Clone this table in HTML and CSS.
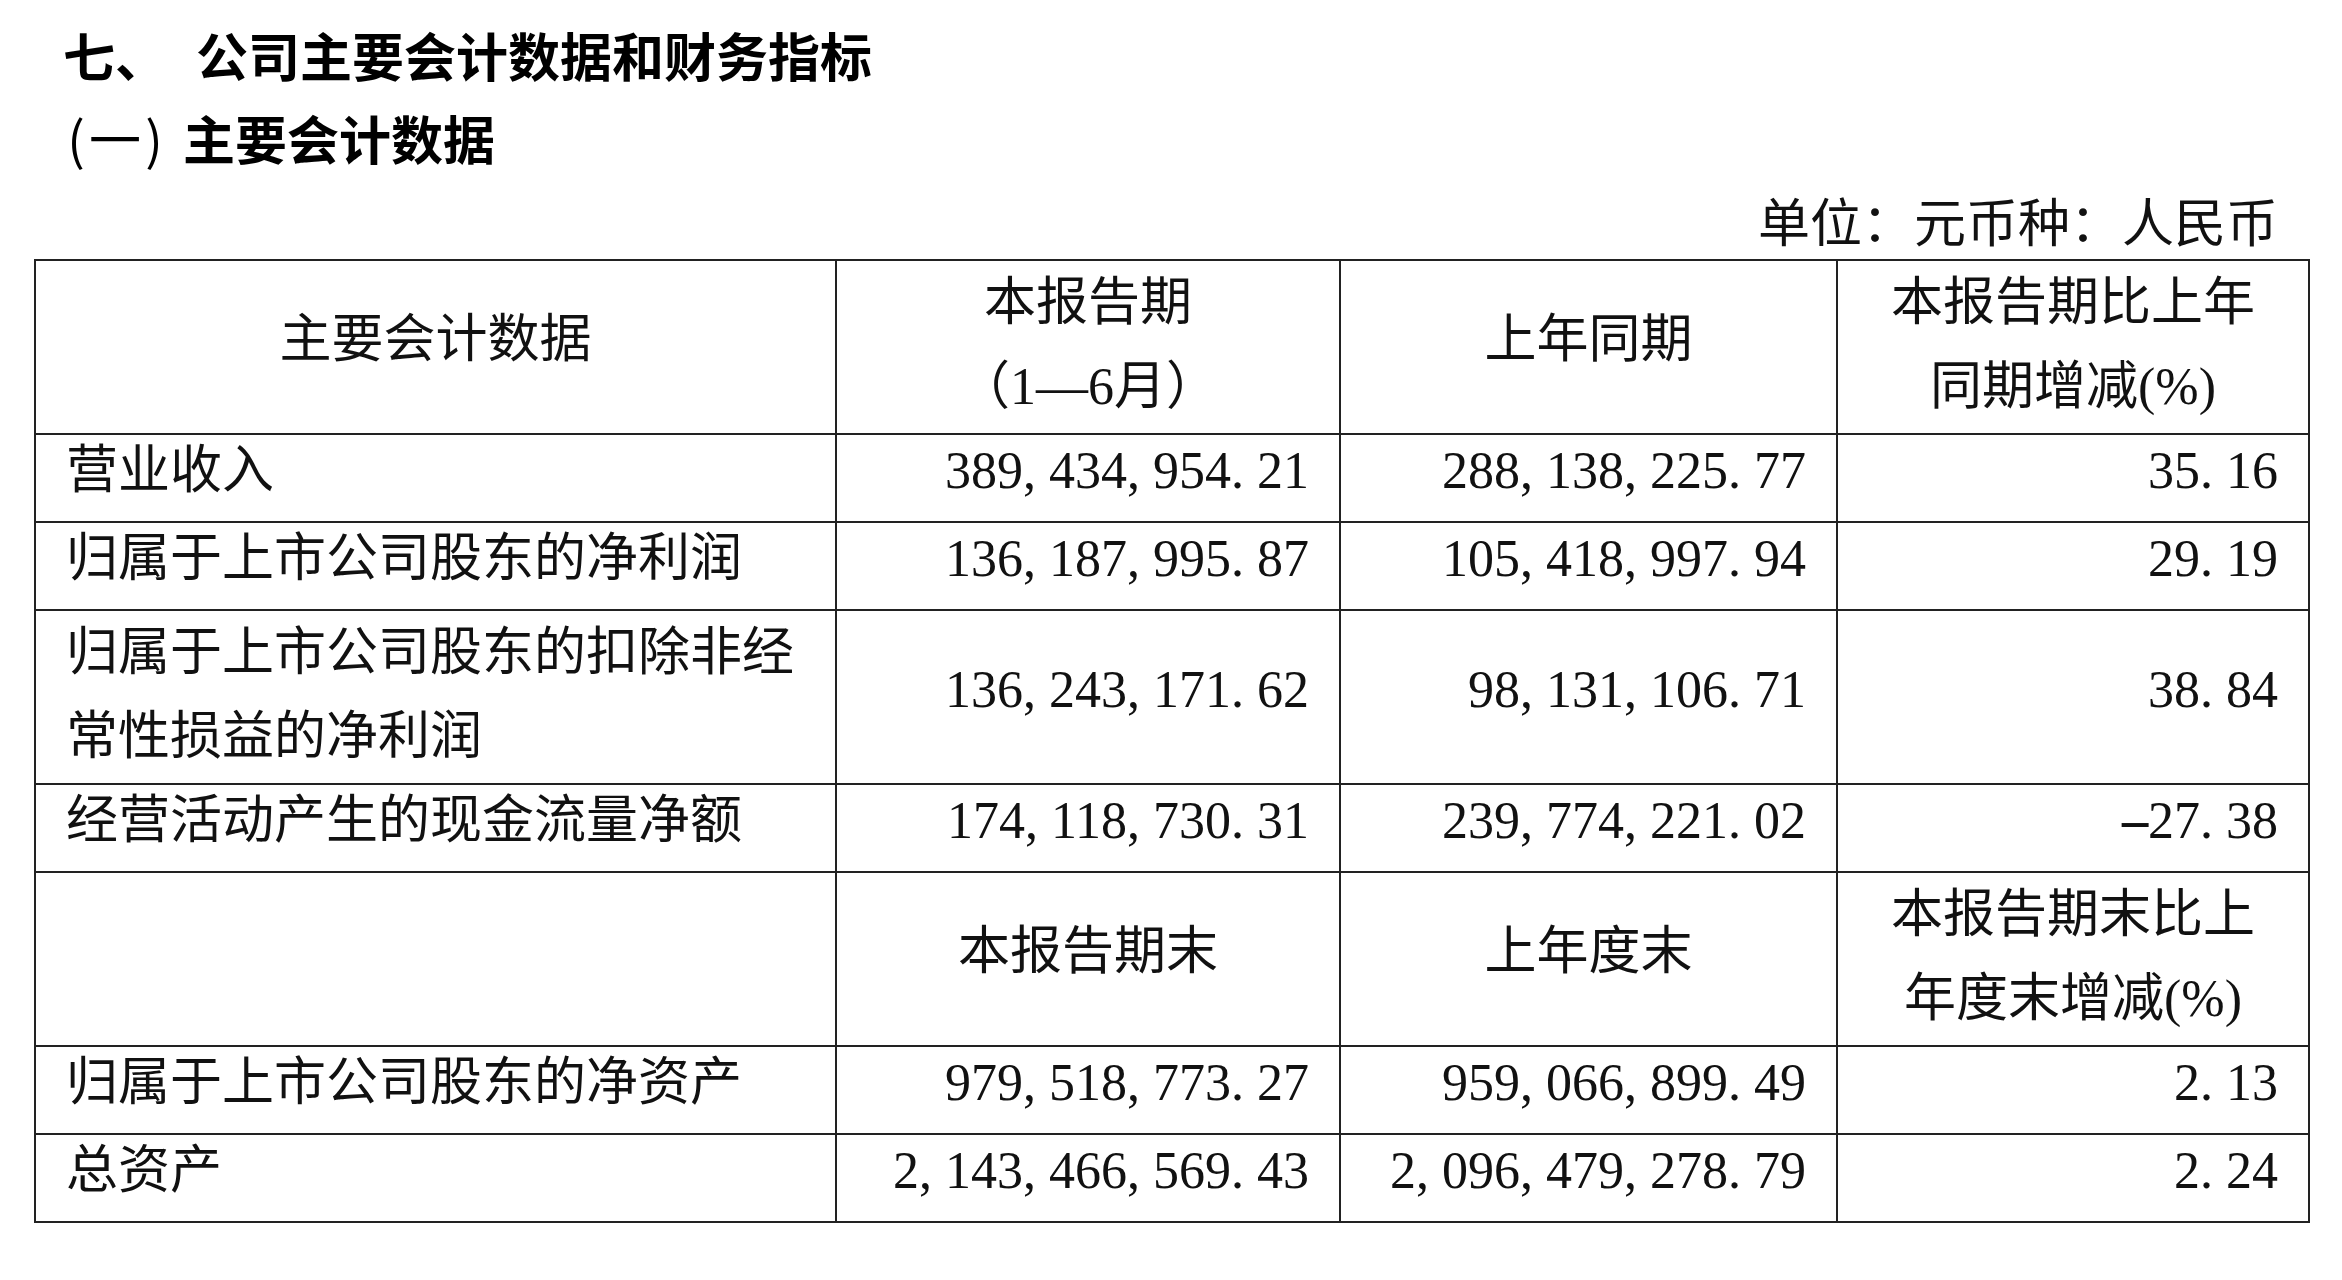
FILE: index.html
```html
<!DOCTYPE html>
<html lang="zh-CN">
<head>
<meta charset="utf-8">
<title>公司主要会计数据和财务指标</title>
<link rel="stylesheet" href="styles.css">
</head>
<body>
<div class="page">
  <h1 class="title"><span class="title-no">七、</span>公司主要会计数据和财务指标</h1>
  <h2 class="subtitle"><span class="sub-no"><span class="hw">(</span>一<span class="hw">)</span></span>主要会计数据</h2>
  <div class="unit">单位：元币种：人民币</div>
  <table class="data">
    <colgroup>
      <col class="c1"><col class="c2"><col class="c3"><col class="c4">
    </colgroup>
    <tr>
      <th>主要会计数据</th>
      <th class="two">本报告期<br>（1—6月）</th>
      <th>上年同期</th>
      <th class="two">本报告期比上年<br>同期增减(%)</th>
    </tr>
    <tr>
      <td class="label">营业收入</td>
      <td class="num">389<span class="p">,</span>434<span class="p">,</span>954<span class="p">.</span>21</td>
      <td class="num">288<span class="p">,</span>138<span class="p">,</span>225<span class="p">.</span>77</td>
      <td class="num">35<span class="p">.</span>16</td>
    </tr>
    <tr>
      <td class="label">归属于上市公司股东的净利润</td>
      <td class="num">136<span class="p">,</span>187<span class="p">,</span>995<span class="p">.</span>87</td>
      <td class="num">105<span class="p">,</span>418<span class="p">,</span>997<span class="p">.</span>94</td>
      <td class="num">29<span class="p">.</span>19</td>
    </tr>
    <tr>
      <td class="label two">归属于上市公司股东的扣除非经<br>常性损益的净利润</td>
      <td class="num">136<span class="p">,</span>243<span class="p">,</span>171<span class="p">.</span>62</td>
      <td class="num">98<span class="p">,</span>131<span class="p">,</span>106<span class="p">.</span>71</td>
      <td class="num">38<span class="p">.</span>84</td>
    </tr>
    <tr>
      <td class="label">经营活动产生的现金流量净额</td>
      <td class="num">174<span class="p">,</span>118<span class="p">,</span>730<span class="p">.</span>31</td>
      <td class="num">239<span class="p">,</span>774<span class="p">,</span>221<span class="p">.</span>02</td>
      <td class="num"><span class="minus">-</span>27<span class="p">.</span>38</td>
    </tr>
    <tr>
      <th></th>
      <th>本报告期末</th>
      <th>上年度末</th>
      <th class="two">本报告期末比上<br>年度末增减(%)</th>
    </tr>
    <tr>
      <td class="label">归属于上市公司股东的净资产</td>
      <td class="num">979<span class="p">,</span>518<span class="p">,</span>773<span class="p">.</span>27</td>
      <td class="num">959<span class="p">,</span>066<span class="p">,</span>899<span class="p">.</span>49</td>
      <td class="num">2<span class="p">.</span>13</td>
    </tr>
    <tr>
      <td class="label">总资产</td>
      <td class="num">2<span class="p">,</span>143<span class="p">,</span>466<span class="p">,</span>569<span class="p">.</span>43</td>
      <td class="num">2<span class="p">,</span>096<span class="p">,</span>479<span class="p">,</span>278<span class="p">.</span>79</td>
      <td class="num">2<span class="p">.</span>24</td>
    </tr>
  </table>
</div>
</body>
</html>
```

FILE: styles.css
```css
html, body {
  margin: 0;
  padding: 0;
  background: #ffffff;
}

body {
  color: #111111;
  font-family: "Noto Sans CJK SC", "Noto Sans", sans-serif;
}

.page {
  padding-top: 13px;
  width: 2342px;
}

.title,
.subtitle {
  margin: 0;
  padding-left: 63px;
  font-size: 52px;
  line-height: 83px;
  font-weight: 700;
  color: #000000;
  white-space: nowrap;
}

.title-no {
  display: inline-block;
  margin-right: 29px;
}

.sub-no {
  display: inline-block;
  margin-right: 16px;
  font-weight: 400;
}

.hw {
  display: inline-block;
  width: 26px;
  text-align: center;
}

.unit {
  margin-left: 34px;
  width: 2274px;
  box-sizing: border-box;
  padding-right: 30px;
  padding-top: 2px;
  text-align: right;
  font-size: 52px;
  line-height: 78px;
  white-space: nowrap;
}

.data {
  margin-left: 34px;
  width: 2274px;
  table-layout: fixed;
  border-collapse: collapse;
  border: 2px solid #222222;
  font-family: "Liberation Serif", "Noto Sans CJK SC", serif;
  font-size: 52px;
  color: #111111;
}

.c1 { width: 801px; }
.c2 { width: 504px; }
.c3 { width: 497px; }
.c4 { width: 472px; }

.data th,
.data td {
  border: 2px solid #222222;
  padding: 0 30px 14px 30px;
  line-height: 72px;
  vertical-align: middle;
  white-space: nowrap;
  font-weight: 400;
}

.data th {
  text-align: center;
}

.data .two {
  line-height: 84px;
  padding-bottom: 4px;
}

.data .label {
  text-align: left;
}

.data .num {
  text-align: right;
}

.p {
  display: inline-block;
  width: 26px;
  text-align: left;
}

.minus {
  display: inline-block;
  width: 26px;
  text-align: center;
  transform: scaleX(2);
}
```
